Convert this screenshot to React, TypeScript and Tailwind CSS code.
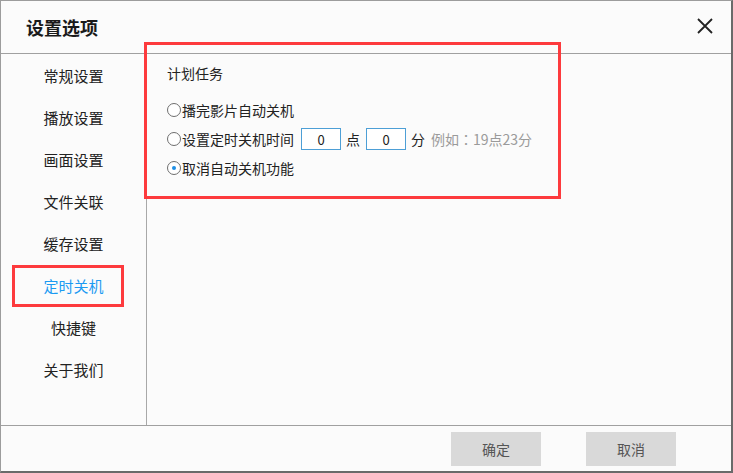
import { useState } from "react";

const menu = ["常规设置", "播放设置", "画面设置", "文件关联", "缓存设置", "定时关机", "快捷键", "关于我们"];

function Radio({ checked, label, onClick }: { checked: boolean; label: string; onClick: () => void }) {
  return (
    <div className="flex items-center cursor-pointer" onClick={onClick}>
      <span className="w-[14px] h-[14px] rounded-full border border-[#6e6e6e] bg-white flex items-center justify-center">
        {checked && <span className="w-[4px] h-[4px] rounded-full bg-[#1e8fe6]" />}
      </span>
      <span className="ml-[1px] text-[14px] leading-5 text-[#222]">{label}</span>
    </div>
  );
}

export default function App() {
  const [mode, setMode] = useState(2);
  const [active, setActive] = useState(5);

  return (
    <div
      className="relative w-[733px] h-[473px] flex flex-col bg-[#fbfbfb] border-l border-t border-r-2 border-b-2 border-l-[#9c9c9c] border-t-[#9c9c9c] border-r-[#6a6a6a] border-b-[#6a6a6a]"
      style={{ fontFamily: '"Noto Sans CJK SC", "Microsoft YaHei", sans-serif' }}
    >
      {/* header */}
      <div className="h-[53px] flex items-center justify-between pl-[25px] pr-[18px] border-b border-[#a0a0a0]">
        <span className="text-[18px] font-bold leading-6 text-[#1a1a1a]">设置选项</span>
        <svg className="w-[16px] h-[16px] mb-[3px]" viewBox="0 0 16 16">
          <path d="M1 1L15 15M15 1L1 15" stroke="#222" strokeWidth="1.8" />
        </svg>
      </div>

      {/* body */}
      <div className="flex-1 flex">
        <div className="w-[146px] border-r border-[#a8a8a8] pt-px flex flex-col">
          {menu.map((m, i) => (
            <div
              key={m}
              onClick={() => setActive(i)}
              className={
                "relative h-[42px] flex items-center justify-center text-[15px] leading-5 cursor-pointer " +
                (i === active ? "text-[#1b9af2]" : "text-[#222]")
              }
            >
              {m}
              {i === 5 && (
                <span className="absolute left-[11px] top-0 w-[112px] h-[42px] border-[3px] border-[#fd3a3d]" />
              )}
            </div>
          ))}
        </div>

        <div className="flex-1 pl-[20px] pt-[9px]">
          <div className="text-[14px] leading-5 text-[#222]">计划任务</div>
          <div className="mt-[16px] flex flex-col gap-[7px]">
            <div className="h-[22px] flex items-center">
              <Radio checked={mode === 0} label="播完影片自动关机" onClick={() => setMode(0)} />
            </div>
            <div className="h-[22px] flex items-center">
              <Radio checked={mode === 1} label="设置定时关机时间" onClick={() => setMode(1)} />
              <input
                defaultValue="0"
                className="ml-[7px] w-[40px] h-[22px] border border-[#4d9fd6] bg-white text-center text-[13px] text-[#222] outline-none"
              />
              <span className="ml-[5px] text-[14px] leading-5 text-[#222]">点</span>
              <input
                defaultValue="0"
                className="ml-[6px] w-[40px] h-[22px] border border-[#4d9fd6] bg-white text-center text-[13px] text-[#222] outline-none"
              />
              <span className="ml-[5px] text-[14px] leading-5 text-[#222]">分</span>
              <span className="ml-[6px] text-[14px] leading-5 text-[#9a9a9a]">
                例如<span className="font-['Noto_Sans_CJK_JP',sans-serif]">：</span>19点23分
              </span>
            </div>
            <div className="h-[22px] flex items-center">
              <Radio checked={mode === 2} label="取消自动关机功能" onClick={() => setMode(2)} />
            </div>
          </div>
        </div>
      </div>

      {/* footer */}
      <div className="h-[46px] border-t border-[#a0a0a0] flex justify-end items-start pt-[6px] pr-[55px] gap-[45px]">
        <button className="w-[90px] h-[34px] bg-[#d9d9d9] text-[14px] text-[#555]">确定</button>
        <button className="w-[90px] h-[34px] bg-[#d9d9d9] text-[14px] text-[#555]">取消</button>
      </div>

      {/* annotation box over content */}
      <div className="absolute left-[143px] top-[41px] w-[417px] h-[157px] border-[3px] border-[#fd3a3d] pointer-events-none" />
    </div>
  );
}
